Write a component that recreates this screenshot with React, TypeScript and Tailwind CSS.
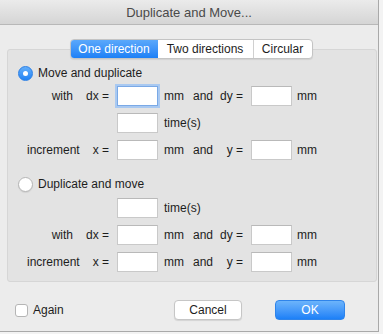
import React from "react";

function Field({ focused = false }: { focused?: boolean }) {
  return (
    <div
      className={
        focused
          ? "h-[20px] w-[41px] bg-white border border-[#7aa9e6] shadow-[0_0_0_2px_#a9c9f1]"
          : "h-[20px] w-[41px] bg-white border border-[#c9c9c9] border-t-[#b9b9b9]"
      }
    />
  );
}

function Radio({ on }: { on: boolean }) {
  if (on) {
    return (
      <div className="h-[15px] w-[15px] rounded-full bg-gradient-to-b from-[#62aefa] to-[#1f82f4] border border-[#2a7fe6] flex items-center justify-center">
        <div className="h-[5px] w-[5px] rounded-full bg-white" />
      </div>
    );
  }
  return (
    <div className="h-[15px] w-[15px] rounded-full bg-white border border-[#b5b5b5] shadow-[0_1px_1px_rgba(0,0,0,0.08)]" />
  );
}

function Row({
  word,
  v1,
  v2,
  focused = false,
}: {
  word: string;
  v1: string;
  v2: string;
  focused?: boolean;
}) {
  return (
    <div className="flex items-center h-[20px]">
      <div className="w-[101px] flex justify-end gap-[13px]">
        <span>{word}</span>
        <span>{v1}</span>
      </div>
      <div className="ml-[8px]">
        <Field focused={focused} />
      </div>
      <span className="ml-[6px] w-[29px]">mm</span>
      <div className="w-[50px] flex justify-between">
        <span>and</span>
        <span>{v2}</span>
      </div>
      <div className="ml-[8px]">
        <Field />
      </div>
      <span className="ml-[5px]">mm</span>
    </div>
  );
}

function Times() {
  return (
    <div className="flex items-center h-[20px]">
      <div className="ml-[109px]">
        <Field />
      </div>
      <span className="ml-[6px]">time(s)</span>
    </div>
  );
}

export default function App() {
  return (
    <div className="w-[383px] h-[334px] bg-[#f3f3f3] font-['Liberation_Sans',Arial,sans-serif] text-[12px] text-[#1d1d1d]">
      <div className="w-[379px] h-[332px] bg-[#ececec] border-r border-b border-[#a9a9a9] flex flex-col">
        <div className="h-[25px] shrink-0 bg-gradient-to-b from-[#ebebeb] to-[#d5d5d5] border-b border-[#b8b8b8] flex items-center justify-center">
          <span className="text-[13px] text-[#4a4a4a] pt-[2px]">Duplicate and Move...</span>
        </div>

        <div className="mt-[14px] flex justify-center pl-[4px] relative z-10">
          <div className="flex h-[20px] rounded-[4px] border border-[#c4c4c4] bg-white shadow-[0_1px_1px_rgba(0,0,0,0.08)] overflow-hidden">
            <div className="w-[87px] flex items-center justify-center bg-gradient-to-b from-[#5aa8fb] to-[#1c80f6] text-white">
              One direction
            </div>
            <div className="w-[96px] flex items-center justify-center border-r border-[#d0d0d0]">
              Two directions
            </div>
            <div className="w-[58px] flex items-center justify-center">Circular</div>
          </div>
        </div>

        <div className="-mt-[10px] ml-[7px] w-[370px] border border-[#d6d6d6] bg-[#e3e3e3] rounded-[3px] pt-[15px] pb-[9px] flex flex-col">
          <div className="flex items-center h-[16px] ml-[10px] gap-[5px]">
            <Radio on />
            <span>Move and duplicate</span>
          </div>
          <div className="mt-[5px]">
            <Row word="with" v1="dx =" v2="dy =" focused />
          </div>
          <div className="mt-[7px]">
            <Times />
          </div>
          <div className="mt-[7px]">
            <Row word="increment" v1="x =" v2="y =" />
          </div>

          <div className="flex items-center h-[16px] ml-[10px] gap-[5px] mt-[16px]">
            <Radio on={false} />
            <span>Duplicate and move</span>
          </div>
          <div className="mt-[6px]">
            <Times />
          </div>
          <div className="mt-[7px]">
            <Row word="with" v1="dx =" v2="dy =" />
          </div>
          <div className="mt-[7px]">
            <Row word="increment" v1="x =" v2="y =" />
          </div>
        </div>

        <div className="mt-[18px] flex items-center h-[20px] pl-[15px]">
          <div className="w-[159px] flex items-center gap-[5px]">
            <div className="h-[13px] w-[13px] rounded-[3px] bg-white border border-[#b5b5b5]" />
            <span>Again</span>
          </div>
          <button className="w-[68px] h-[20px] rounded-[4px] bg-white border border-[#c6c6c6] shadow-[0_1px_1px_rgba(0,0,0,0.1)] text-[12px]">
            Cancel
          </button>
          <button className="ml-[33px] w-[70px] h-[20px] rounded-[4px] bg-gradient-to-b from-[#6cb4fb] to-[#1b80f7] border border-[#2f84ea] text-white text-[12px]">
            OK
          </button>
        </div>
      </div>
    </div>
  );
}
